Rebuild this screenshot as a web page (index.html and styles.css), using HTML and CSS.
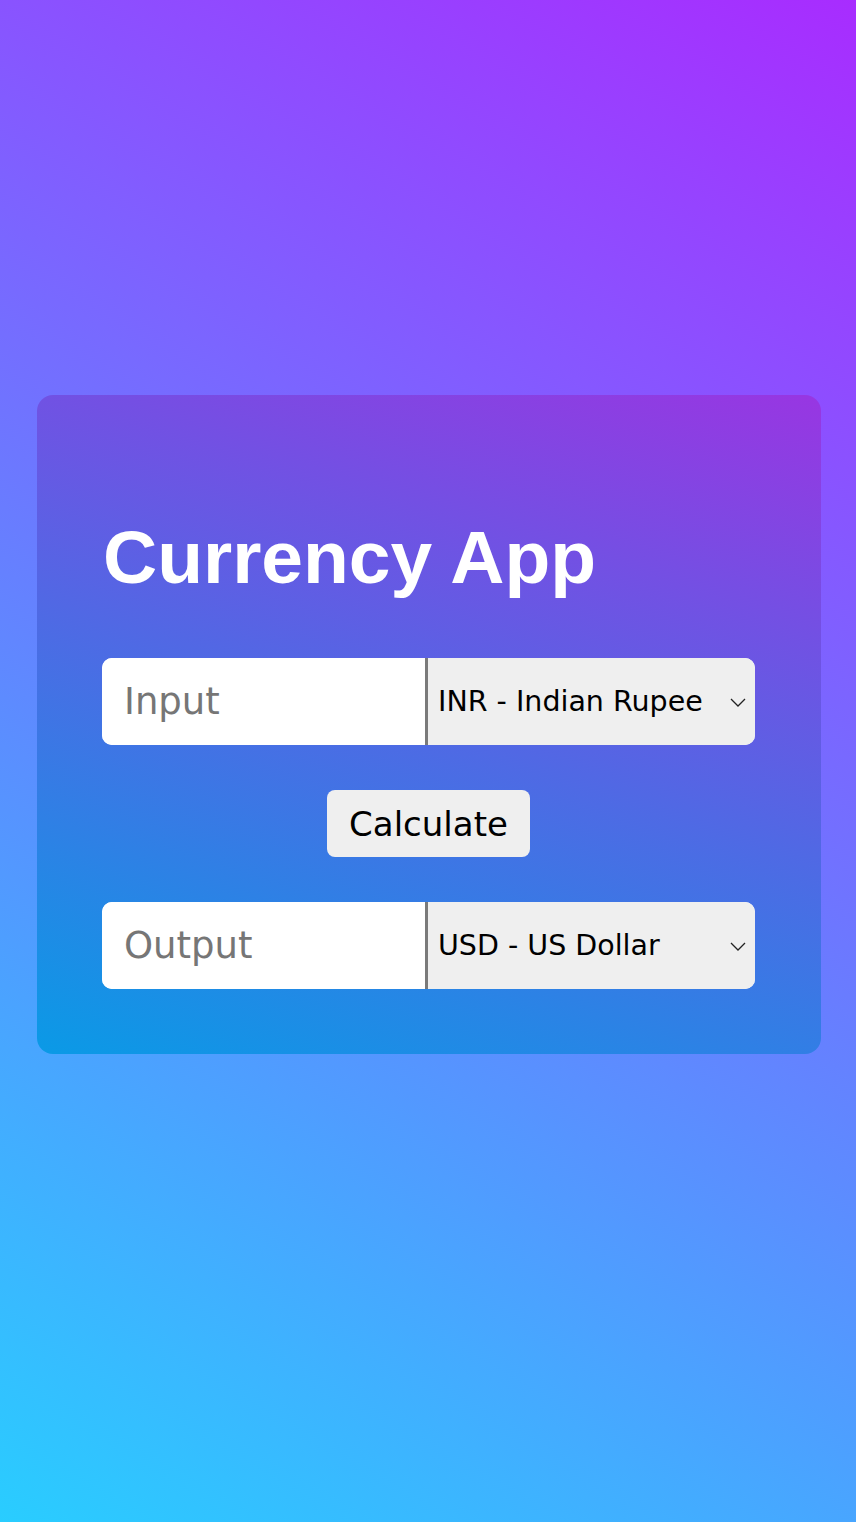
FILE: index.html
```html
<!DOCTYPE html>
<html lang="en">
<head>
<meta charset="utf-8">
<title>Currency App</title>
<link rel="stylesheet" href="styles.css">
</head>
<body>
  <main class="card">
    <h1 class="title">Currency App</h1>
    <div class="row">
      <input class="amount" type="text" placeholder="Input">
      <div class="select-wrap">
        <select class="currency">
          <option>INR - Indian Rupee</option>
          <option>USD - US Dollar</option>
        </select>
        <svg class="chev" viewBox="0 0 16 9" width="16" height="9"><path d="M1 1l7 7 7-7" fill="none" stroke="#222" stroke-width="1.3"/></svg>
      </div>
    </div>
    <div class="action">
      <button class="calc" type="button">Calculate</button>
    </div>
    <div class="row">
      <input class="amount" type="text" placeholder="Output">
      <div class="select-wrap">
        <select class="currency">
          <option>USD - US Dollar</option>
          <option>INR - Indian Rupee</option>
        </select>
        <svg class="chev" viewBox="0 0 16 9" width="16" height="9"><path d="M1 1l7 7 7-7" fill="none" stroke="#222" stroke-width="1.3"/></svg>
      </div>
    </div>
  </main>
</body>
</html>
```
FILE: styles.css
```css
html, body {
  margin: 0;
  padding: 0;
}
body {
  width: 856px;
  height: 1522px;
  box-sizing: border-box;
  padding: 395px 0 0 2px;
  display: flex;
  flex-direction: column;
  align-items: center;
  background: linear-gradient(30deg, #29cdff 0%, #a82cff 100%);
  font-family: "DejaVu Sans", sans-serif;
}
.card {
  width: 784px;
  box-sizing: border-box;
  padding: 125px 66px 65px 65px;
  border-radius: 16px;
  background: linear-gradient(18deg, #0a9ae6 0%, #9836e2 100%);
  display: flex;
  flex-direction: column;
}
.title {
  margin: 0 0 63px 1px;
  font-family: "Liberation Sans", Arial, sans-serif;
  font-weight: 700;
  font-size: 75px;
  line-height: 75px;
  color: #fff;
  letter-spacing: 0;
}
.row {
  display: flex;
  height: 87px;
  border-radius: 10px;
  overflow: hidden;
  background: #fff;
}
.amount {
  flex: 0 0 326px;
  width: 326px;
  min-width: 0;
  box-sizing: border-box;
  border: none;
  border-right: 3px solid #7a7a7a;
  padding: 0 0 0 22px;
  margin: 0;
  font-family: "DejaVu Sans", sans-serif;
  font-size: 37px;
  color: #111;
  background: #fff;
  outline: none;
}
.amount::placeholder {
  color: #767676;
}
.select-wrap {
  flex: 1 1 auto;
  min-width: 0;
  position: relative;
  background: #efefef;
}
.currency {
  appearance: none;
  -webkit-appearance: none;
  width: 100%;
  height: 100%;
  border: none;
  margin: 0;
  padding: 0 0 0 10px;
  background: transparent;
  font-family: "DejaVu Sans", sans-serif;
  font-size: 28.5px;
  color: #000;
  outline: none;
}
.chev {
  position: absolute;
  right: 9px;
  top: 40px;
  pointer-events: none;
}
.action {
  display: flex;
  justify-content: center;
  margin: 45px 0;
}
.calc {
  width: 203px;
  height: 67px;
  box-sizing: border-box;
  border: none;
  border-radius: 8px;
  background: #efefef;
  padding: 0;
  font-family: "DejaVu Sans", sans-serif;
  font-size: 34px;
  color: #000;
}
```
